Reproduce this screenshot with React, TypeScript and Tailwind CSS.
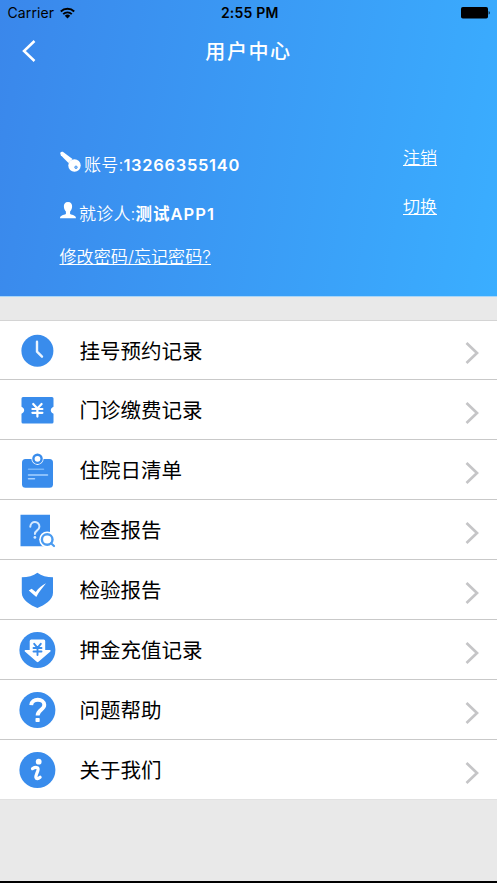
import type { ReactNode } from "react";

const BLUE = "#398cec";

function Icon({ children }: { children: ReactNode }) {
  return (
    <svg width="40" height="40" viewBox="0 0 40 40" fill="none" strokeLinecap="round" strokeLinejoin="round">
      {children}
    </svg>
  );
}

const MENU: { label: string; icon: ReactNode }[] = [
  {
    label: "挂号预约记录",
    icon: (
      <>
        <circle cx="20.4" cy="20.7" r="16" fill={BLUE} />
        <path d="M20 11.7v10l5 5" stroke="#eaf4ff" strokeWidth="2.4" />
      </>
    ),
  },
  {
    label: "门诊缴费记录",
    icon: (
      <>
        <path
          d="M6 7h29a1.500 1.500 0 0 1 1.500 1.500v8.300c-3.600 1.700-3.600 5.200 0 7v8.200a1.500 1.500 0 0 1-1.500 1.500H6a1.500 1.500 0 0 1-1.500-1.500v-8.200c3.600-1.800 3.600-5.300 0-7V8.500A1.500 1.500 0 0 1 6 7z"
          fill={BLUE}
        />
        <path d="M16.200 14l4.200 4.600 4.200-4.600M15.400 19h10M15.400 22.800h10M20.400 18.600v8" stroke="#fff" strokeWidth="2.200" />
      </>
    ),
  },
  {
    label: "住院日清单",
    icon: (
      <>
        <rect x="5" y="9" width="31" height="28.700" rx="3.500" fill={BLUE} />
        <circle cx="20.500" cy="8.800" r="6.100" fill="#fff" />
        <circle cx="20.500" cy="8.800" r="4.100" stroke={BLUE} strokeWidth="2.400" fill="#fff" />
        <path d="M11.500 19.200h15" stroke="#77b5f8" strokeWidth="1.500" />
        <path d="M11.500 25h19M11.500 28.700h6" stroke="#a7d1ff" strokeWidth="1.500" />
      </>
    ),
  },
  {
    label: "检查报告",
    icon: (
      <>
        <path d="M3.500 4.700H33v31.500H3.500z" fill={BLUE} />
        <path d="M13.300 16.800c.2-6.500 9.300-6.200 9.100 0-.1 3.800-4.500 3.400-4.500 7.200" stroke="#d5eaff" strokeWidth="2" />
        <circle cx="17.900" cy="27.400" r="1.400" fill="#d5eaff" />
        <circle cx="30.200" cy="29.500" r="8" fill="#fff" />
        <circle cx="30.200" cy="29.500" r="5.300" stroke="#4a9bf0" strokeWidth="2.400" />
        <path d="M34 33.300l3 2.700" stroke="#4a9bf0" strokeWidth="2.200" />
      </>
    ),
  },
  {
    label: "检验报告",
    icon: (
      <>
        <path
          d="M20.400 2.700c4 3.300 9.500 4.600 15.600 4.600v15.400c0 7.300-8.500 12.300-15.600 15.300-7.100-3-15.600-8-15.600-15.300V7.300c6.100 0 11.600-1.300 15.600-4.600z"
          fill={BLUE}
        />
        <path d="M11.800 20.600l2.800-1.900 4.200 3.300c2.700-3.900 6-6.900 10.200-8.800-2.800 3.600-7 8.200-9.700 13.800z" fill="#fff" />
      </>
    ),
  },
  {
    label: "押金充值记录",
    icon: (
      <>
        <circle cx="20.400" cy="20" r="18" fill={BLUE} />
        <path
          d="M14.200 9.500h12.500a1.500 1.500 0 0 1 1.500 1.500v9h4.700a.8.8 0 0 1 .5 1.400L21.500 31.800a1.300 1.300 0 0 1-1.800 0L7.900 21.400a.8.8 0 0 1 .5-1.400h4.300V11a1.500 1.500 0 0 1 1.500-1.500z"
          fill="#fff"
        />
        <path d="M17.200 13.800l3.300 4 3.300-4M16.500 18h8M16.500 21.500h8M20.500 18v7" stroke={BLUE} strokeWidth="1.900" />
      </>
    ),
  },
  {
    label: "问题帮助",
    icon: (
      <>
        <circle cx="20.400" cy="20" r="18" fill={BLUE} />
        <path
          d="M14.200 15.200c.3-7.200 12.900-7.200 13.100-.3.100 4.800-6.700 5-6.700 10.600"
          stroke="#fff"
          strokeWidth="3.900"
          strokeLinecap="butt"
        />
        <rect x="18.500" y="28" width="4.200" height="4" rx=".7" fill="#fff" />
      </>
    ),
  },
  {
    label: "关于我们",
    icon: (
      <>
        <circle cx="20.400" cy="20" r="18" fill={BLUE} />
        <circle cx="21.700" cy="11.700" r="2.900" fill="#fff" />
        <path d="M15.500 18.600c2.800-1.600 5.800-1.600 5.600.7-.2 2.400-2.600 6-2.200 8.200.3 1.700 2.300 1.200 4.200-.3" stroke="#fff" strokeWidth="3.200" />
      </>
    ),
  },
];

function StatusBar() {
  return (
    <div className="grid h-[25px] grid-cols-3 items-center pl-[7.500px] pr-[7px] font-['Inter',sans-serif] text-black">
      <div className="flex items-center gap-[6px]">
        <span className="text-[14px] tracking-[0.100px]">Carrier</span>
        <svg width="15" height="12" viewBox="0 0 15 12" fill="none" stroke="#000" strokeWidth="1.900">
          <path d="M.8 4.500a9.500 9.500 0 0 1 13.400 0M3.200 7.100a6.100 6.100 0 0 1 8.600 0" />
          <path d="M7.500 11.500L4.800 8.800a3.800 3.800 0 0 1 5.400 0z" fill="#000" stroke="none" />
        </svg>
      </div>
      <span className="pl-[2px] text-center text-[14px] font-semibold tracking-[0.200px]">2:55 PM</span>
      <svg className="justify-self-end" width="29" height="12" viewBox="0 0 29 12">
        <rect width="27" height="11.500" rx="1.800" />
        <path d="M27.700 4c1.300.3 1.300 3.300 0 3.600z" />
      </svg>
    </div>
  );
}

function Header() {
  return (
    <header className="h-[297px] border-b border-[#a9d6f8] bg-[linear-gradient(100deg,#3a87eb,#3aaeff)] text-white">
      <StatusBar />
      <div className="grid h-[53px] grid-cols-[60px_1fr_60px] items-center">
        <svg className="mb-px ml-[22px]" width="14" height="22" viewBox="0 0 14 22" fill="none" stroke="#fff" strokeWidth="2.500">
          <path d="M12.500 1L2 11l10.500 10" />
        </svg>
        <h1 className="text-center text-[20px] font-medium tracking-[1.600px]">用户中心</h1>
      </div>

      <div className="flex justify-between pl-[59.500px] pr-[60px] pt-[66px] text-[17px] leading-6">
        <div>
          <div className="flex h-[42px] items-center">
            <svg width="21" height="22" viewBox="0 0 21 22" fill="#fff" className="mb-[7px]">
              <path d="M.2 2Q1 .4 2.800.8l9.700 7.300-4 3.900L.8 4.200z" />
              <circle cx="14.500" cy="14.500" r="6.200" />
              <circle cx="16" cy="16.300" r="1.300" fill="#8dc0f6" stroke="#398eee" strokeWidth=".7" />
            </svg>
            <span className="ml-[3.500px] font-[350] tracking-[0.200px]">账号:</span>
            <span className="font-['Inter',sans-serif] text-[16.500px] font-semibold tracking-[0.700px]">13266355140</span>
          </div>
          <div className="mt-[7px] flex h-[42px] items-center">
            <svg width="16" height="17" viewBox="0 0 16 17" fill="#fff" className="mb-[7px]">
              <path d="M8 0c3 0 4.400 2 4.100 5-.2 2.300-1.200 3.700-2 4.500v2.400c2.500 1.200 5.900 1.300 5.900 4.300H0c0-3 3.400-3.100 5.900-4.300V9.500c-.8-.8-1.800-2.200-2-4.500C3.600 2 5 0 8 0z" />
            </svg>
            <span className="ml-[3.500px] font-[350] tracking-[0.200px]">就诊人:</span>
            <span className="text-[16.500px] font-bold tracking-[1px]">
              测试<span className="font-['Inter',sans-serif] font-semibold">APP1</span>
            </span>
          </div>
          <a className="mt-[10px] block font-[350] tracking-[0.100px] underline underline-offset-1">修改密码/忘记密码?</a>
        </div>
        <div className="flex flex-col gap-[25px] pt-[2px] font-[350]">
          <a className="underline underline-offset-1">注销</a>
          <a className="underline underline-offset-1">切换</a>
        </div>
      </div>
    </header>
  );
}

export default function App() {
  return (
    <div className="flex h-[883px] w-[497px] flex-col overflow-hidden border-b-2 border-black bg-[#e9e9e9] font-['Inter','Noto_Sans_CJK_SC',sans-serif]">
      <Header />

      <ul className="mt-[23px] border-t border-[#d4d4d4] bg-white">
        {MENU.map((item) => (
          <li
            key={item.label}
            className="flex h-[60px] items-center border-b border-[#c9c9c9] pl-[17px] pr-[18px] first:h-[59px] last:border-[#e1e1e1]"
          >
            <Icon>{item.icon}</Icon>
            <span className="ml-[22.500px] flex-1 pt-[3px] text-[20.500px] leading-[30px] text-black">{item.label}</span>
            <svg className="mt-[6px]" width="14" height="22" viewBox="0 0 14 22" fill="none" stroke="#c5c5c7" strokeWidth="2.700">
              <path d="M1.500 1l10.500 10L1.500 21" />
            </svg>
          </li>
        ))}
      </ul>
    </div>
  );
}
